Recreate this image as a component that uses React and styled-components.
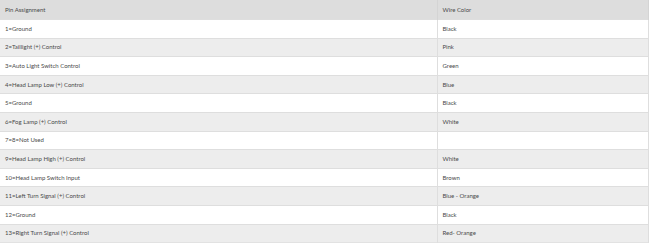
import React from 'react'
import styled, { createGlobalStyle } from 'styled-components'

const GlobalStyle = createGlobalStyle`
  html, body {
    margin: 0;
    padding: 0;
    background: #ffffff;
  }
`

const Table = styled.table`
  width: 649px;
  table-layout: fixed;
  border-collapse: collapse;
  font-family: Lato, 'Liberation Sans', sans-serif;
  font-size: 6px;
  color: #4a4a4a;
  border-right: 1px solid #e2e2e2;
  border-bottom: 1px solid #e2e2e2;
`

const Col = styled.col`
  width: ${({ $w }) => $w || 'auto'};
`

const HeadCell = styled.th`
  background: #dddddd;
  text-align: left;
  font-weight: normal;
  height: 19px;
  padding: 0 5px;
  border-right: 1px solid #d4d4d4;
`

const Row = styled.tr`
  height: 18.6px;
  background: ${({ $striped }) => ($striped ? '#ededed' : '#ffffff')};
`

const Cell = styled.td`
  padding: 0 5px;
  border-top: 1px solid #dedede;
  border-right: 1px solid #dedede;
  vertical-align: middle;
  line-height: 8px;
`

const rows = [
  ['1=Ground', 'Black'],
  ['2=Taillight (+) Control', 'Pink'],
  ['3=Auto Light Switch Control', 'Green'],
  ['4=Head Lamp Low (+) Control', 'Blue'],
  ['5=Ground', 'Black'],
  ['6=Fog Lamp (+) Control', 'White'],
  ['7=8=Not Used', ''],
  ['9=Head Lamp High (+) Control', 'White'],
  ['10=Head Lamp Switch Input', 'Brown'],
  ['11=Left Turn Signal (+) Control', 'Blue - Orange'],
  ['12=Ground', 'Black'],
  ['13=Right Turn Signal (+) Control', 'Red- Orange'],
]

const App = () => (
  <>
    <GlobalStyle />
    <Table>
      <colgroup>
        <Col $w="437px" />
        <Col />
      </colgroup>
      <thead>
        <tr>
          <HeadCell>Pin Assignment</HeadCell>
          <HeadCell>Wire Color</HeadCell>
        </tr>
      </thead>
      <tbody>
        {rows.map(([pin, color], i) => (
          <Row key={pin} $striped={i % 2 === 1}>
            <Cell>{pin}</Cell>
            <Cell>{color}</Cell>
          </Row>
        ))}
      </tbody>
    </Table>
  </>
)

export default App
